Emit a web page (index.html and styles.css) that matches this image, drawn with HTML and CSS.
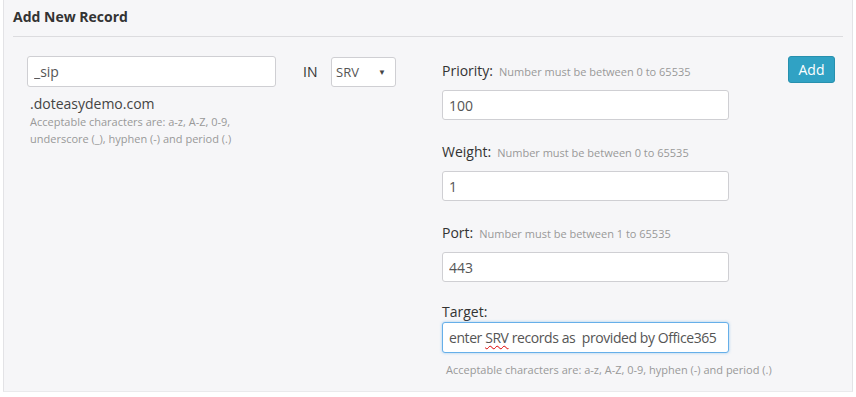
FILE: index.html
```html
<!DOCTYPE html>
<html>
<head>
<meta charset="utf-8">
<link rel="stylesheet" href="styles.css">
</head>
<body>
<div class="panel">
  <div class="panel-head">
    <h3 class="title">Add New Record</h3>
  </div>
  <div class="form-row">
    <div class="col-left">
      <div class="name-row">
        <input class="field field-name" type="text" value="_sip">
        <span class="in-label">IN</span>
        <div class="select">SRV<span class="caret">▼</span></div>
      </div>
      <div class="domain">.doteasydemo.com</div>
      <div class="help">Acceptable characters are: a-z, A-Z, 0-9,<br>underscore (_), hyphen (-) and period (.)</div>
    </div>
    <div class="col-right">
      <div class="group">
        <div class="label-row"><span class="label">Priority:</span><span class="note">Number must be between 0 to 65535</span></div>
        <input class="field field-num" type="text" value="100">
      </div>
      <div class="group">
        <div class="label-row"><span class="label">Weight:</span><span class="note">Number must be between 0 to 65535</span></div>
        <input class="field field-num" type="text" value="1">
      </div>
      <div class="group">
        <div class="label-row"><span class="label">Port:</span><span class="note">Number must be between 1 to 65535</span></div>
        <input class="field field-num" type="text" value="443">
      </div>
      <div class="group group-target">
        <div class="label-row label-row-tight"><span class="label">Target:</span></div>
        <div class="field field-num field-focus">enter <span class="spell">SRV</span> records as&nbsp; provided by Office365</div>
        <div class="help help-target">Acceptable characters are: a-z, A-Z, 0-9, hyphen (-) and period (.)</div>
      </div>
    </div>
    <div class="col-btn">
      <button class="btn-add">Add</button>
    </div>
  </div>
</div>
</body>
</html>
```

FILE: styles.css
```css
html, body {
  margin: 0;
  padding: 0;
  background: #ffffff;
}
body {
  font-family: "Open Sans", "Noto Sans", sans-serif;
  color: #333;
}
.panel {
  margin-left: 3px;
  width: 848px;
  height: 391px;
  background: #f6f6f8;
  border-left: 1px solid #e3e3e6;
  border-right: 1px solid #e3e3e6;
  border-bottom: 1px solid #eaeaec;
  box-sizing: content-box;
}
.panel-head {
  margin: 0 9px;
  border-bottom: 1px solid #dcdcdf;
  height: 37px;
  box-sizing: border-box;
}
.title {
  margin: 0;
  padding-top: 7px;
  font-size: 14px;
  font-weight: 700;
  line-height: 20px;
  color: #333;
}
.form-row {
  display: flex;
  padding: 19px 0 0 23px;
}
.col-left {
  width: 415px;
}
.name-row {
  display: flex;
  align-items: center;
  height: 31px;
}
.field {
  box-sizing: border-box;
  background: #fff;
  border: 1px solid #cfcfd3;
  border-radius: 3px;
  font-family: "Open Sans", "Noto Sans", sans-serif;
  font-size: 14px;
  color: #555;
  padding: 0 6px;
  outline: none;
}
.field-name {
  width: 249px;
  height: 31px;
}
.in-label {
  margin-left: 27px;
  font-size: 14px;
  color: #333;
  width: 28px;
}
.select {
  box-sizing: border-box;
  width: 65px;
  height: 30px;
  background: #fff;
  border: 1px solid #cfcfd3;
  border-radius: 3px;
  font-size: 13px;
  color: #555;
  display: flex;
  align-items: center;
  justify-content: space-between;
  padding: 0 9px 0 4px;
}
.caret {
  font-size: 8px;
  color: #444;
}
.domain {
  margin-top: 8px;
  font-size: 14px;
  line-height: 18px;
  color: #444;
  padding-left: 3px;
}
.help {
  font-size: 11px;
  line-height: 17px;
  color: #999;
  padding-left: 3px;
}
.col-right {
  width: 346px;
  display: flex;
  flex-direction: column;
  gap: 17px;
}
.group {
  display: flex;
  flex-direction: column;
  padding-top: 5px;
}
.group-target {
  padding-top: 3px;
}
.label-row {
  display: flex;
  align-items: baseline;
  height: 20px;
  margin-bottom: 9px;
}
.label-row-tight {
  margin-bottom: 0;
}
.label {
  font-size: 14px;
  color: #333;
}
.note {
  font-size: 11px;
  color: #999;
  margin-left: 6px;
}
.field-num {
  width: 287px;
  height: 30px;
  display: block;
}
.field-focus {
  height: 31px;
  line-height: 29px;
  white-space: nowrap;
  overflow: hidden;
  letter-spacing: -0.42px;
  border-color: #66afe9;
  box-shadow: 0 0 3px rgba(102, 175, 233, 0.6);
}
.spell {
  text-decoration: underline wavy #d00;
  text-decoration-thickness: 1px;
  text-underline-offset: 2px;
}
.help-target {
  margin-top: 8px;
  padding-left: 4px;
}
.btn-add {
  width: 47px;
  height: 27px;
  background: #30a2c4;
  border: 1px solid #2790ae;
  border-radius: 3px;
  color: #fff;
  font-family: "Open Sans", "Noto Sans", sans-serif;
  font-size: 14px;
  padding: 0;
}
```
